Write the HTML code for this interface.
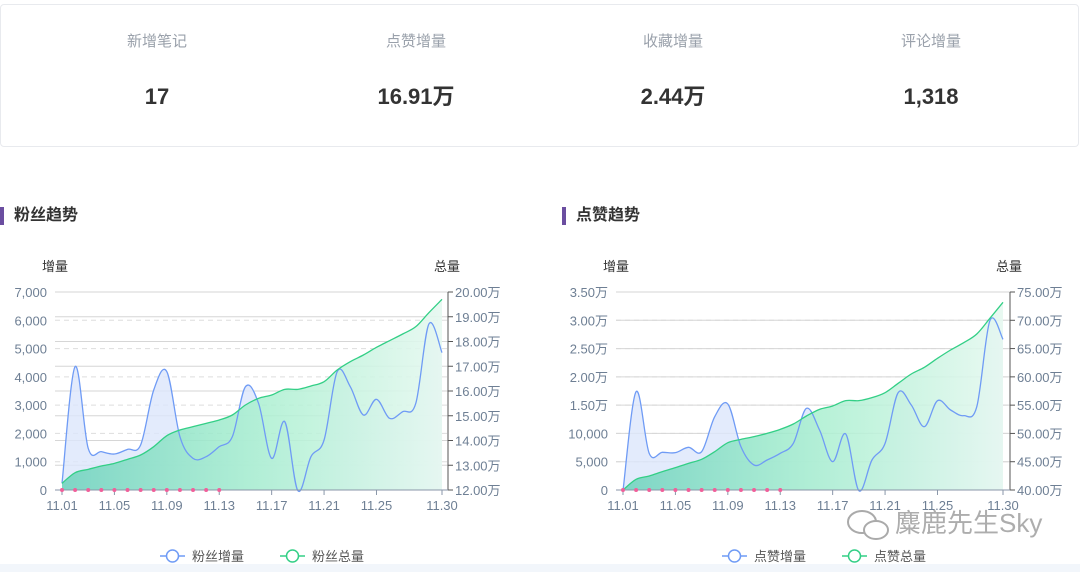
<!DOCTYPE html>
<html><head><meta charset="utf-8"><style>
*{margin:0;padding:0;box-sizing:border-box}
body{width:1080px;height:572px;background:#fff;font-family:"Liberation Sans","Noto Sans CJK SC",sans-serif;position:relative;overflow:hidden}
.card{position:absolute;left:0;top:4px;width:1079px;height:143px;border:1px solid #e8eaee;border-radius:4px}
.st{position:absolute;width:200px;text-align:center;margin-left:-100px}
.st .l{position:absolute;top:32px;width:200px;font-size:15px;line-height:20px;color:#9aa1ab}
.st .v{position:absolute;top:84px;width:200px;font-size:22px;line-height:26px;height:26px;font-weight:bold;color:#333}
.title{position:absolute;top:207px;font-size:16px;font-weight:bold;color:#333;padding-left:10px;border-left:4px solid #6b4ea0;line-height:18px;height:18px}
.bot{position:absolute;left:0;top:564px;width:1080px;height:8px;background:#f2f6fb}
svg{position:absolute;left:0;top:0}
</style></head><body>
<div class="card"></div>
<div class="st" style="left:157px"><div class="l">新增笔记</div><div class="v">17</div></div>
<div class="st" style="left:416px"><div class="l">点赞增量</div><div class="v">16.91万</div></div>
<div class="st" style="left:673px"><div class="l">收藏增量</div><div class="v">2.44万</div></div>
<div class="st" style="left:931px"><div class="l">评论增量</div><div class="v">1,318</div></div>
<div class="title" style="left:0">粉丝趋势</div>
<div class="title" style="left:562px">点赞趋势</div>
<div class="bot"></div>
<svg id="s" width="1080" height="572" font-family="Liberation Sans, Noto Sans CJK SC, sans-serif"></svg>
<script>
var s=document.getElementById('s'),h='';
h+='<defs><linearGradient id="g" x1="0" x2="1" y1="0" y2="0"><stop offset="0" stop-color="#72d3bf" stop-opacity=".9"/><stop offset="0.5" stop-color="#a8efcf" stop-opacity=".85"/><stop offset="1" stop-color="#e6f8f0" stop-opacity=".9"/></linearGradient></defs>';
function path(pts){var d='M'+pts[0][0]+','+pts[0][1];for(var i=0;i<pts.length-1;i++){var p0=pts[i-1]||pts[i],p1=pts[i],p2=pts[i+1],p3=pts[i+2]||p2;var t=0.17;d+=' C'+(p1[0]+(p2[0]-p0[0])*t)+','+(p1[1]+(p2[1]-p0[1])*t)+' '+(p2[0]-(p3[0]-p1[0])*t)+','+(p2[1]-(p3[1]-p1[1])*t)+' '+p2[0]+','+p2[1];}return d;}
function chart(o){
 var x0=o.x0,x1=o.x1,top=292,bot=490,dx=(x1-x0)/29;
 for(var i=0;i<=7;i++){var y=bot-i*(bot-top)/7;h+='<line x1="'+(o.x0-7)+'" x2="'+o.ax+'" y1="'+y+'" y2="'+y+'" stroke="#ddd" stroke-dasharray="5,4"/>';h+='<text x="'+(o.x0-15)+'" y="'+(y+5)+'" font-size="13" fill="#6e7f94" text-anchor="end">'+o.ll[i]+'</text>';}
 for(var i=0;i<=o.rn;i++){var y=bot-i*(bot-top)/o.rn;h+='<line x1="'+(o.x0-7)+'" x2="'+o.ax+'" y1="'+y+'" y2="'+y+'" stroke="#d6d6d6"/>';h+='<line x1="'+o.ax+'" x2="'+(o.ax+5)+'" y1="'+y+'" y2="'+y+'" stroke="#555"/>';h+='<text x="'+(o.ax+7)+'" y="'+(y+5)+'" font-size="13" fill="#6e7f94">'+o.rl[i]+'</text>';}
 h+='<line x1="'+o.ax+'" x2="'+o.ax+'" y1="'+top+'" y2="'+bot+'" stroke="#555"/>';
 var b=o.b.map(function(v,i){return [x0+i*dx,250+v/3]}),g=o.g.map(function(v,i){return [x0+i*dx,250+v/3]});
 h+='<path d="'+path(b)+' L'+x1+','+bot+' L'+x0+','+bot+'Z" fill="#dce6fb" fill-opacity=".8"/>';
 h+='<path d="'+path(g)+' L'+x1+','+bot+' L'+x0+','+bot+'Z" fill="url(#g)"/>';
 h+='<path d="'+path(b)+'" fill="none" stroke="#6f9bf5" stroke-width="1.3"/>';
 h+='<path d="'+path(g)+'" fill="none" stroke="#33cf86" stroke-width="1.3"/>';
 h+='<line x1="'+(x0-7)+'" x2="'+o.ax+'" y1="'+bot+'" y2="'+bot+'" stroke="#8a96a8"/>';
 var lab=['11.01','11.05','11.09','11.13','11.17','11.21','11.25'];
 for(var i=0;i<7;i++){var x=x0+i*4*dx;h+='<line x1="'+x+'" x2="'+x+'" y1="'+bot+'" y2="'+(bot+5)+'" stroke="#8a96a8"/><text x="'+x+'" y="'+(bot+20)+'" font-size="13" fill="#6e7f94" text-anchor="middle">'+lab[i]+'</text>';}
 h+='<line x1="'+x1+'" x2="'+x1+'" y1="'+bot+'" y2="'+(bot+5)+'" stroke="#8a96a8"/><text x="'+x1+'" y="'+(bot+20)+'" font-size="13" fill="#6e7f94" text-anchor="middle">11.30</text>';
 for(var i=0;i<13;i++)h+='<circle cx="'+(x0+i*dx)+'" cy="'+bot+'" r="2" fill="#f0609a"/>';
 h+='<text x="'+(o.x0-20)+'" y="271" font-size="13" fill="#333">增量</text><text x="'+(o.ax-14)+'" y="271" font-size="13" fill="#333">总量</text>';
 var lx=o.lx;
 h+='<line x1="'+lx+'" x2="'+(lx+25)+'" y1="556" y2="556" stroke="#6f9bf5" stroke-width="1.5"/><circle cx="'+(lx+12.5)+'" cy="556" r="6" fill="#fff" stroke="#6f9bf5" stroke-width="1.5"/><text x="'+(lx+32)+'" y="561" font-size="13" fill="#555">'+o.n1+'</text>';
 lx+=120;h+='<line x1="'+lx+'" x2="'+(lx+25)+'" y1="556" y2="556" stroke="#33cf86" stroke-width="1.5"/><circle cx="'+(lx+12.5)+'" cy="556" r="6" fill="#fff" stroke="#33cf86" stroke-width="1.5"/><text x="'+(lx+32)+'" y="561" font-size="13" fill="#555">'+o.n2+'</text>';
}
chart({x0:62,x1:442,ax:448,rn:8,lx:160,n1:'粉丝增量',n2:'粉丝总量',
ll:['0','1,000','2,000','3,000','4,000','5,000','6,000','7,000'],
rl:['12.00万','13.00万','14.00万','15.00万','16.00万','17.00万','18.00万','19.00万','20.00万'],
b:[700,350,595,605,612,598,585,420,365,560,625,620,590,560,410,460,625,515,722,620,570,365,410,495,448,505,485,460,222,308],
g:[700,668,658,648,640,628,615,590,557,540,530,520,510,495,465,445,435,418,418,408,395,360,335,315,292,272,252,230,188,148]});
chart({x0:623,x1:1003,ax:1010,rn:7,lx:722,n1:'点赞增量',n2:'点赞总量',
ll:['0','5,000','10,000','1.50万','2.00万','2.50万','3.00万','3.50万'],
rl:['40.00万','45.00万','50.00万','55.00万','60.00万','65.00万','70.00万','75.00万'],
b:[722,425,610,607,608,592,605,500,462,590,645,630,610,580,475,540,635,552,722,630,580,428,465,530,452,480,497,470,212,268],
g:[720,688,678,665,653,640,628,605,578,568,560,550,538,522,498,478,468,452,452,443,428,400,372,352,325,300,278,252,205,157]});
h+='<text x="895" y="532" font-size="26" fill="#999" fill-opacity=".8">麋鹿先生Sky</text>';
h+='<ellipse cx="862" cy="522" rx="14" ry="11" fill="none" stroke="#aaa" stroke-width="2"/><ellipse cx="876" cy="530" rx="12" ry="9" fill="#fff" stroke="#aaa" stroke-width="2"/>';
s.innerHTML=h;
</script>
</body></html>
